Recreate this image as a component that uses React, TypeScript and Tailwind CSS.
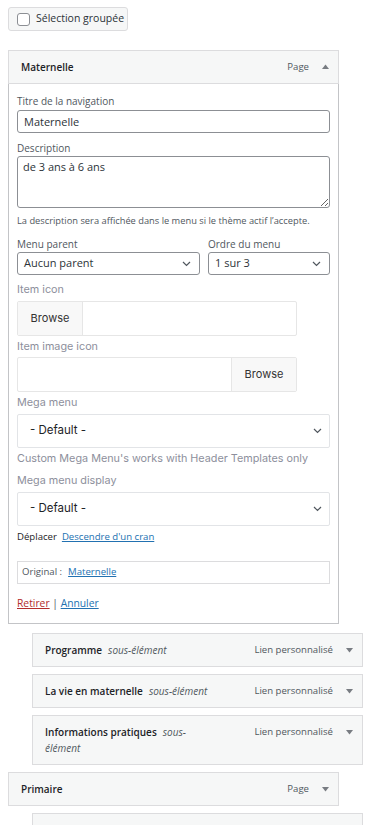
import React from "react";

const Chevron = ({ className = "" }: { className?: string }) => (
  <svg width="9" height="6" viewBox="0 0 9 6" className={className}>
    <path d="M1 1l3.5 3.5L8 1" fill="none" stroke="#50575e" strokeWidth="1.2" />
  </svg>
);

const Tri = ({ up }: { up?: boolean }) => (
  <svg width="7" height="5" viewBox="0 0 7 5">
    <path d={up ? "M0 5L3.5 0.5L7 5Z" : "M0 0L3.5 4.5L7 0Z"} fill="#787c82" />
  </svg>
);

interface BarProps {
  title: string;
  sub?: boolean;
  type: string;
  indent?: boolean;
}

const ItemBar = ({ title, sub, type, indent }: BarProps) => (
  <div
    className={`flex items-start justify-between w-[331px] border border-[#dcdcde] bg-[#f6f7f7] py-[8px] pl-[12px] pr-[9px] ${
      indent ? "ml-[32px]" : "ml-[8px]"
    }`}
  >
    <div className="max-w-[165px] text-[10px] leading-[16px] text-[#1d2327]">
      <span className="font-semibold">{title}</span>
      {sub && <span className="ml-[6px] italic text-[#50575e]">sous-élément</span>}
    </div>
    <div className="flex items-center gap-[13px] text-[9.6px] leading-[16px] text-[#50575e]">
      <span>{type}</span>
      <Tri />
    </div>
  </div>
);

const WpLabel = ({ children }: { children: React.ReactNode }) => (
  <div className="text-[10px] leading-[14px] text-[#50575e]">{children}</div>
);

const PopLabel = ({ children, className = "" }: { children: React.ReactNode; className?: string }) => (
  <div
    className={`text-[10.8px] leading-[18px] text-[#8d8f9c] ${className}`}
    style={{ fontFamily: "Inter, 'Noto Sans', sans-serif" }}
  >
    {children}
  </div>
);

const PopSelect = ({ className = "" }: { className?: string }) => (
  <div
    className={`flex items-center justify-between h-[34px] w-[313px] border border-[#e2e4e7] rounded-[2px] bg-white pl-[12px] pr-[7px] text-[11.5px] text-[#1d2327] ${className}`}
    style={{ fontFamily: "Inter, 'Noto Sans', sans-serif" }}
  >
    <span>- Default -</span>
    <Chevron />
  </div>
);

const BrowseGroup = ({ right, className = "" }: { right?: boolean; className?: string }) => (
  <div
    className={`flex h-[35px] w-[280px] border border-[#e6e6e6] rounded-[2px] bg-white ${
      right ? "justify-end" : ""
    } ${className}`}
    style={{ fontFamily: "Inter, 'Noto Sans', sans-serif" }}
  >
    <div
      className={`flex items-center justify-center w-[65px] h-full bg-[#f8f8f8] text-[11px] text-[#333] ${
        right ? "border-l border-[#e6e6e6]" : "border-r border-[#e6e6e6]"
      }`}
    >
      Browse
    </div>
  </div>
);

const App = () => {
  return (
    <div
      className="w-[387px] h-[825px] overflow-hidden bg-white"
      style={{ fontFamily: "'Open Sans', 'Noto Sans', sans-serif" }}
    >
      <div className="pt-[7px] pl-[8px]">
        <div className="flex items-center w-[120px] h-[24px] border border-[#dcdcde] rounded-[3px] bg-[#f6f7f7] pl-[8px] gap-[6px] whitespace-nowrap text-[10.5px] text-[#2c3338]">
          <span className="block shrink-0 w-[13px] h-[13px] border border-[#8c8f94] rounded-[3px] bg-white" />
          <span>Sélection groupée</span>
        </div>
      </div>

      <div className="mt-[19px] flex flex-col">
        {/* Maternelle, expanded */}
        <div className="ml-[8px] w-[331px]">
          <div className="flex items-center justify-between h-[34px] border border-[#dcdcde] bg-[#f6f7f7] pl-[12px] pr-[9px]">
            <span className="text-[10px] font-semibold text-[#1d2327]">Maternelle</span>
            <div className="flex items-center gap-[13px] text-[9.6px] text-[#50575e]">
              <span>Page</span>
              <Tri up />
            </div>
          </div>
          <div className="border border-t-0 border-[#c3c4c7] bg-white pt-[10px] pb-[13px] pl-[8px]">
            <WpLabel>Titre de la navigation</WpLabel>
            <input
              readOnly
              value="Maternelle"
              className="mt-[2px] block h-[23px] w-[313px] rounded-[3px] border border-[#8c8f94] px-[6px] text-[11px] text-[#2c3338] outline-none"
            />
            <div className="mt-[8px]">
              <WpLabel>Description</WpLabel>
            </div>
            <textarea
              readOnly
              value="de 3 ans à 6 ans"
              className="mt-[1px] block h-[52px] w-[313px] rounded-[3px] border border-[#8c8f94] px-[5px] py-[3px] text-[11px] leading-[14px] text-[#2c3338] outline-none"
            />
            <div className="mt-[6px] text-[9.3px] leading-[14px] text-[#50575e]">
              La description sera affichée dans le menu si le thème actif l’accepte.
            </div>
            <div className="mt-[9px] flex gap-[8px]">
              <div className="w-[183px]">
                <WpLabel>Menu parent</WpLabel>
                <div className="mt-[1px] flex items-center justify-between h-[23px] rounded-[3px] border border-[#8c8f94] pl-[6px] pr-[8px] text-[11px] text-[#2c3338]">
                  <span>Aucun parent</span>
                  <Chevron />
                </div>
              </div>
              <div className="w-[122px]">
                <WpLabel>Ordre du menu</WpLabel>
                <div className="mt-[1px] flex items-center justify-between h-[23px] rounded-[3px] border border-[#8c8f94] pl-[6px] pr-[8px] text-[11px] text-[#2c3338]">
                  <span>1 sur 3</span>
                  <Chevron />
                </div>
              </div>
            </div>
            <PopLabel className="mt-[6px]">Item icon</PopLabel>
            <BrowseGroup className="mt-[2px]" />
            <PopLabel className="mt-[2px]">Item image icon</PopLabel>
            <BrowseGroup right className="mt-[1px]" />
            <PopLabel className="mt-[2px]">Mega menu</PopLabel>
            <PopSelect className="mt-[2px]" />
            <PopLabel className="mt-[2px]">Custom Mega Menu's works with Header Templates only</PopLabel>
            <PopLabel className="mt-[4px]">Mega menu display</PopLabel>
            <PopSelect className="mt-[2px]" />
            <div className="mt-[4px] flex gap-[5px] text-[9.6px] leading-[14px] text-[#1d2327]">
              <span>Déplacer</span>
              <span className="text-[#2271b1] underline">Descendre d'un cran</span>
            </div>
            <div className="mt-[17px] flex items-center gap-[6px] h-[23px] w-[313px] border border-[#dcdcde] pl-[4px] text-[9.6px] text-[#50575e]">
              <span>Original :</span>
              <span className="text-[#2271b1] underline">Maternelle</span>
            </div>
            <div className="mt-[12px] text-[10.3px] leading-[14px] text-[#50575e]">
              <span className="text-[#b32d2e] underline">Retirer</span>
              <span> | </span>
              <span className="text-[#2271b1] underline">Annuler</span>
            </div>
          </div>
        </div>

        <div className="mt-[9px] flex flex-col gap-[7px]">
          <ItemBar indent sub title="Programme" type="Lien personnalisé" />
          <ItemBar indent sub title="La vie en maternelle" type="Lien personnalisé" />
          <ItemBar indent sub title="Informations pratiques" type="Lien personnalisé" />
          <ItemBar title="Primaire" type="Page" />
          <ItemBar indent title={"\u00a0"} type={"\u00a0"} />
        </div>
      </div>
    </div>
  );
};

export default App;
